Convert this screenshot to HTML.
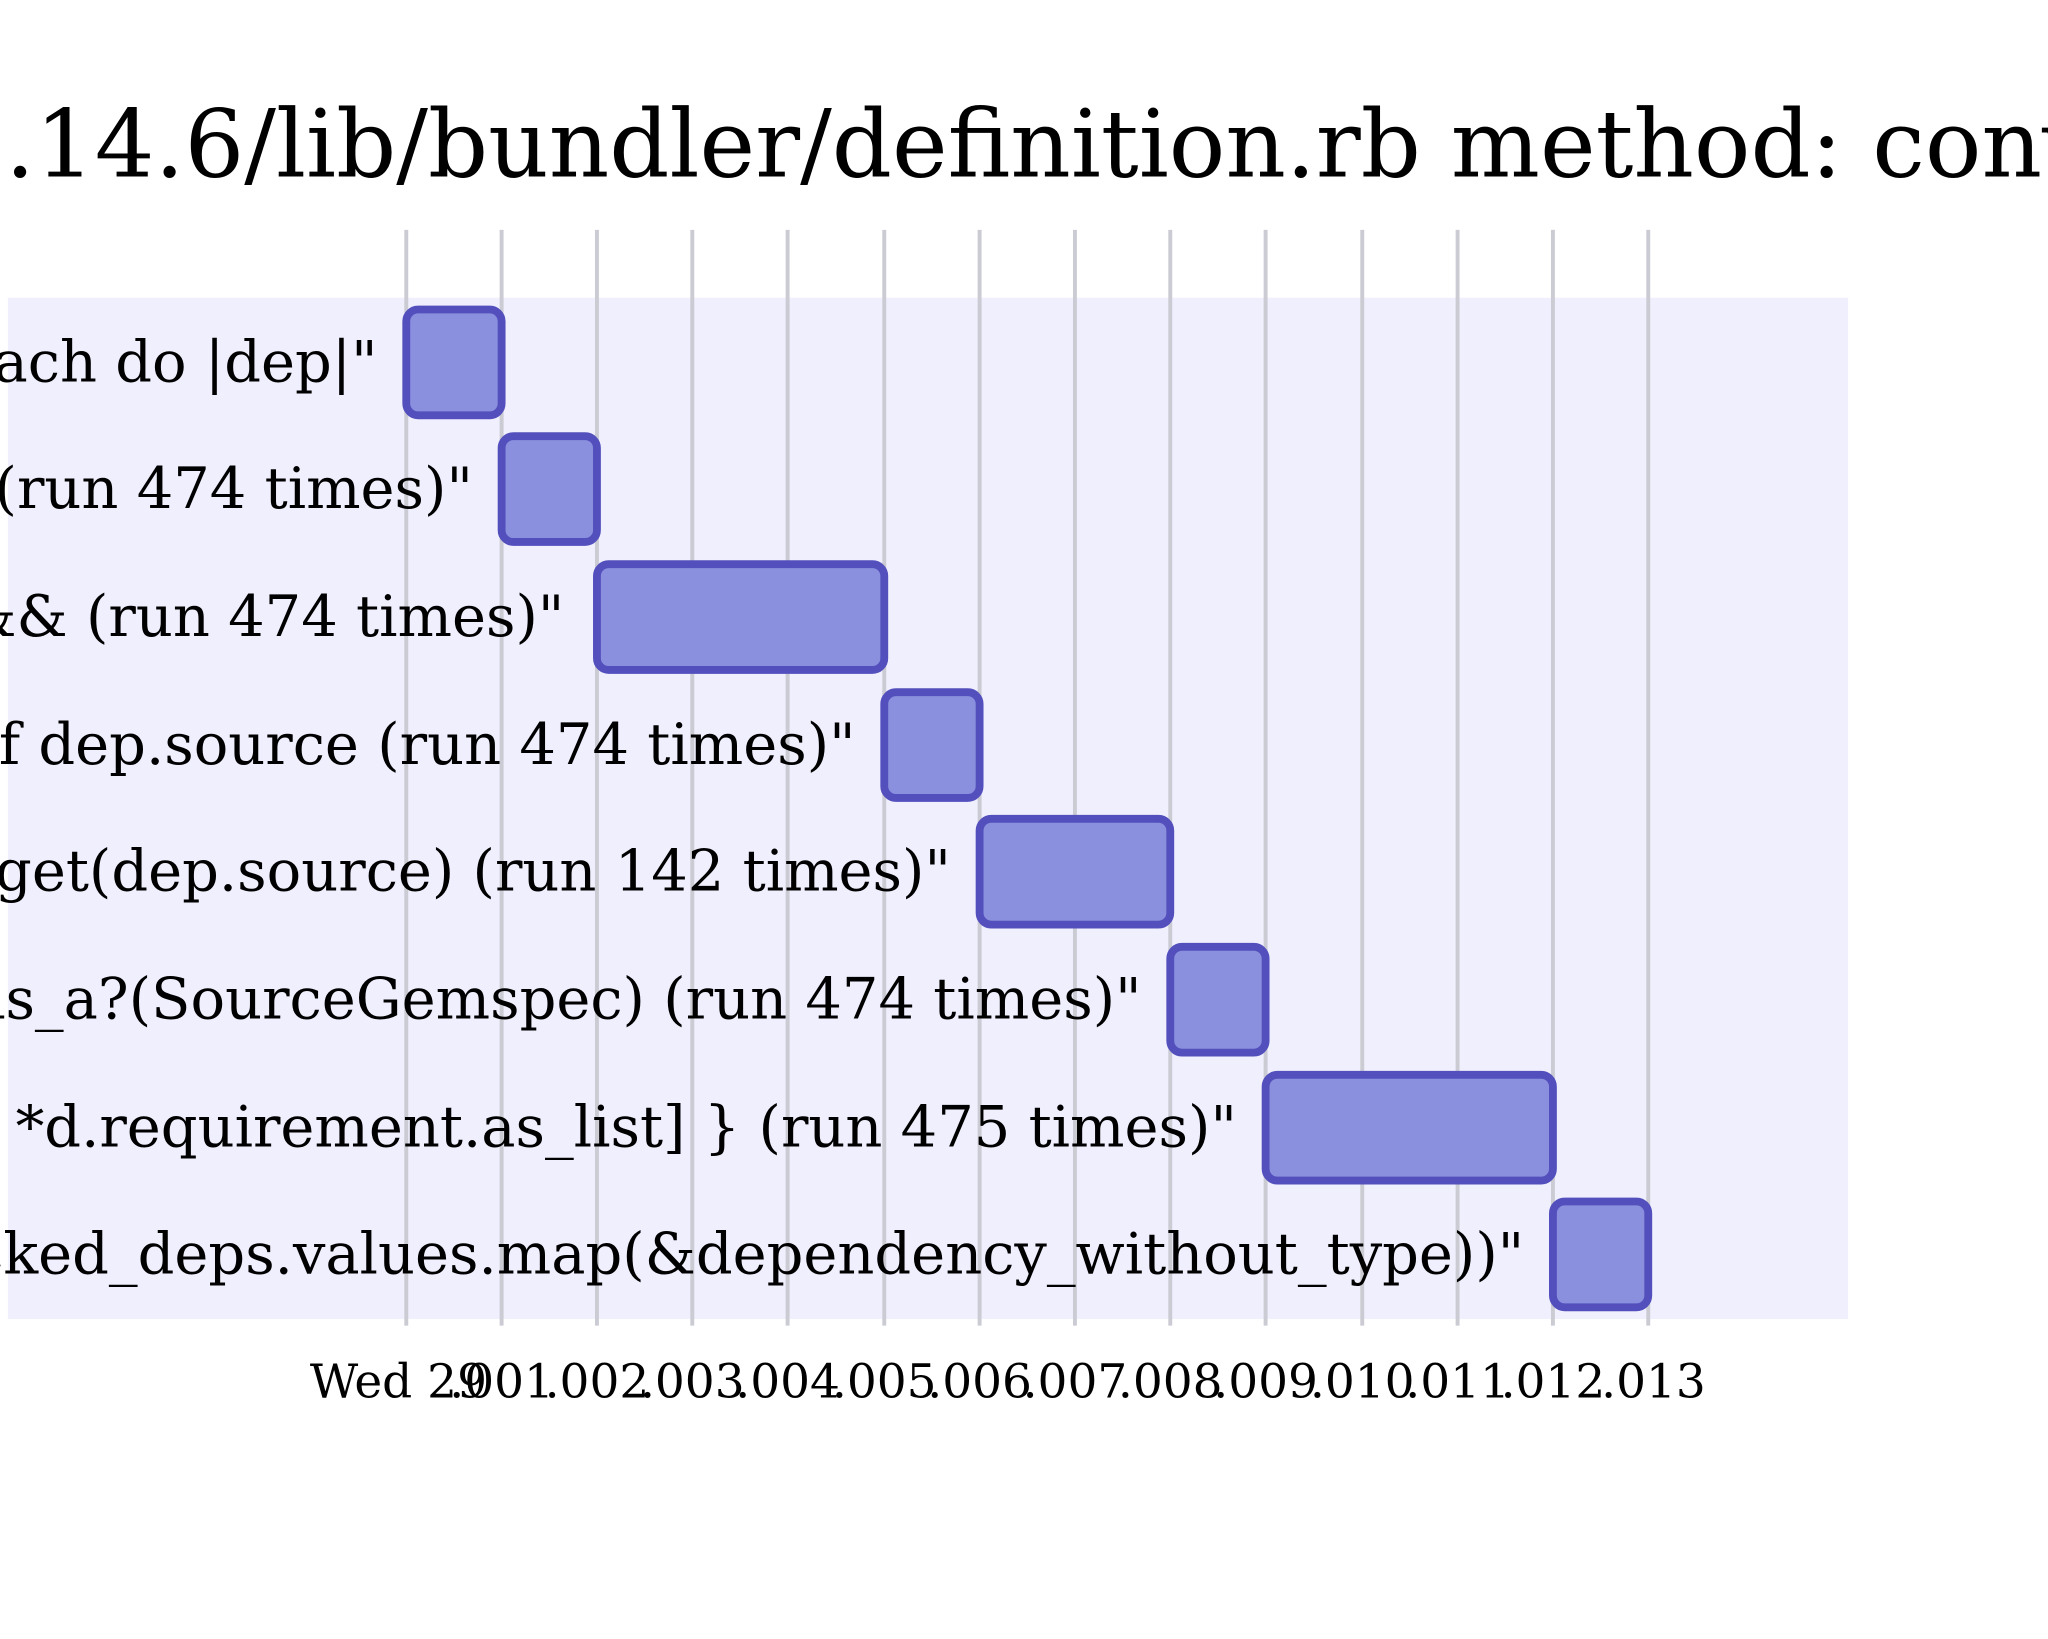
<!DOCTYPE html>
<html><head><meta charset="utf-8"><style>html,body{margin:0;padding:0;background:#fff;overflow:hidden}svg{display:block}</style></head>
<body>
<svg width="2048" height="1639" viewBox="0 0 1568 1255" xmlns="http://www.w3.org/2000/svg" font-family="'DejaVu Serif', 'Liberation Serif', serif">
<rect width="1568" height="1255" fill="#fff"/>
<text x="-42" y="135" font-size="72" fill="#000">1.14.6/lib/bundler/definition.rb method: converge_locked_specs</text>
<rect x="6" y="228" width="1409" height="782" fill="#efeffd"/>
<g stroke="#cbcbd3" stroke-width="3">
<line x1="311" y1="176" x2="311" y2="1015"/><line x1="384" y1="176" x2="384" y2="1015"/><line x1="457" y1="176" x2="457" y2="1015"/><line x1="530" y1="176" x2="530" y2="1015"/><line x1="603" y1="176" x2="603" y2="1015"/><line x1="677" y1="176" x2="677" y2="1015"/><line x1="750" y1="176" x2="750" y2="1015"/><line x1="823" y1="176" x2="823" y2="1015"/><line x1="896" y1="176" x2="896" y2="1015"/><line x1="969" y1="176" x2="969" y2="1015"/><line x1="1043" y1="176" x2="1043" y2="1015"/><line x1="1116" y1="176" x2="1116" y2="1015"/><line x1="1189" y1="176" x2="1189" y2="1015"/><line x1="1262" y1="176" x2="1262" y2="1015"/>
</g>
<g fill="#8a90dd" stroke="#534fbc" stroke-width="6">
<rect x="311" y="237" width="73" height="81" rx="9"/>
<rect x="384" y="334" width="73" height="81" rx="9"/>
<rect x="457" y="432" width="220" height="81" rx="9"/>
<rect x="677" y="530" width="73" height="81" rx="9"/>
<rect x="750" y="627" width="146" height="81" rx="9"/>
<rect x="896" y="725" width="73" height="81" rx="9"/>
<rect x="969" y="823" width="220" height="81" rx="9"/>
<rect x="1189" y="920" width="73" height="81" rx="9"/>
</g>
<g font-size="44" fill="#000" text-anchor="end">
<text x="289" y="292">locked_deps.each do |dep|"</text>
<text x="362" y="389">dep_changed (run 474 times)"</text>
<text x="432" y="487">dep.source &amp;&amp; (run 474 times)"</text>
<text x="655" y="585">deps_changed &lt;&lt; dep if dep.source (run 474 times)"</text>
<text x="728" y="682">sources.get(dep.source) (run 142 times)"</text>
<text x="874" y="780">dep.source.is_a?(SourceGemspec) (run 474 times)"</text>
<text x="947" y="878">[d.name, *d.requirement.as_list] } (run 475 times)"</text>
<text x="1167" y="975">Set.new(locked_deps.values.map(&amp;dependency_without_type))"</text>
</g>
<g font-size="36" fill="#000" text-anchor="middle">
<text x="305" y="1070">Wed 29</text>
<text x="384" y="1070">.001</text><text x="457" y="1070">.002</text><text x="530" y="1070">.003</text><text x="603" y="1070">.004</text><text x="677" y="1070">.005</text><text x="750" y="1070">.006</text><text x="823" y="1070">.007</text><text x="896" y="1070">.008</text><text x="969" y="1070">.009</text><text x="1043" y="1070">.010</text><text x="1116" y="1070">.011</text><text x="1189" y="1070">.012</text><text x="1266" y="1070">.013</text>
</g>
</svg>
</body></html>
